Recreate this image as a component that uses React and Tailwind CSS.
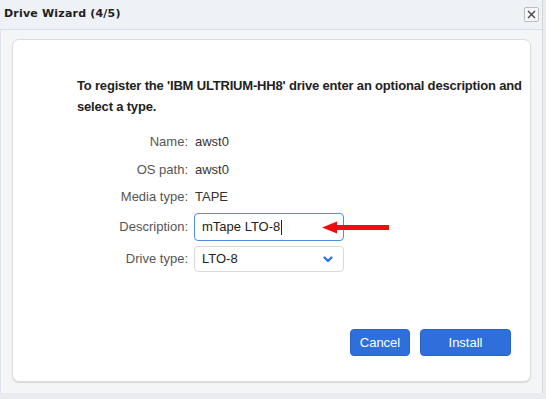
import React from "react";

const Row = ({ label, children }) => (
  <div className="flex items-center leading-[20px]">
    <div className="w-[181px] text-right pr-[6px] text-[#555]">{label}</div>
    <div className="flex-1">{children}</div>
  </div>
);

export default function App() {
  return (
    <div className="w-[546px] h-[399px] bg-[#e9ebee] relative overflow-hidden font-['Liberation_Sans',Arial,sans-serif]">
      <div className="w-[543px] h-[393px] flex flex-col bg-[#f4f5f7] border-r border-[#d3d7dd]">
        <div className="h-[30px] flex items-center justify-between pl-[4px] pr-[3px] bg-[#eef1f5] border-b border-[#d6dfec]">
          <span className="font-['DejaVu_Sans',sans-serif] font-bold text-[11px] tracking-[0.2px] text-[#222]">Drive Wizard (4/5)</span>
          <button className="w-[15px] h-[15px] flex items-center justify-center border border-[#b9bcc1] rounded-[2px] bg-[#f6f6f6]">
            <svg width="9" height="9" viewBox="0 0 9 9">
              <path d="M1 1 L8 8 M8 1 L1 8" stroke="#444" strokeWidth="1.4" />
            </svg>
          </button>
        </div>
        <div className="flex-1 pl-[11px] pr-[11px] pt-[9px] pb-[11px] border-l border-[#dde3ec]">
          <div className="h-full bg-white rounded-[7px] border border-[#dcdcdc] shadow-[0_1px_1px_rgba(0,0,0,0.12)] flex flex-col">
            <div className="pl-[64px] pr-0 pt-[35px] text-[13px] font-bold leading-[21px] tracking-[-0.18px] text-[#222]">
              To register the 'IBM ULTRIUM-HH8' drive enter an optional description and select a type.
            </div>
            <div className="mt-[15px] text-[13px] text-[#333] flex flex-col">
              <Row label="Name:">
                <span className="pl-[1px]">awst0</span>
              </Row>
              <div className="h-[8px]" />
              <Row label="OS path:">
                <span className="pl-[1px]">awst0</span>
              </Row>
              <div className="h-[7px]" />
              <Row label="Media type:">
                <span className="pl-[1px]">TAPE</span>
              </Row>
              <div className="h-[6px]" />
              <Row label="Description:">
                <div className="flex items-center">
                  <div className="w-[150px] h-[28px] border border-[#4f8de6] rounded-[4px] flex items-center pl-[7px] text-[#222]">
                    mTape LTO-8<span className="inline-block w-[1px] h-[15px] bg-[#222] ml-[1px]" />
                  </div>
                  <svg width="68" height="13" viewBox="0 0 68 13" className="ml-[-22px]">
                    <path d="M0 6.5 L15 0.5 L15 4 L67 4 L67 9 L15 9 L15 12.5 Z" fill="#f20d0d" />
                  </svg>
                </div>
              </Row>
              <div className="h-[5px]" />
              <Row label="Drive type:">
                <div className="w-[150px] h-[26px] border border-[#dadada] rounded-[4px] flex items-center justify-between pl-[7px] pr-[10px] text-[#222]">
                  <span>LTO-8</span>
                  <svg width="10" height="7" viewBox="0 0 10 7">
                    <path d="M1.5 1.5 L5 5 L8.5 1.5" stroke="#2a6fe0" strokeWidth="2.2" fill="none" strokeLinecap="round" strokeLinejoin="round" />
                  </svg>
                </div>
              </Row>
            </div>
            <div className="flex-1" />
            <div className="flex justify-end gap-[10px] pr-[19px] pb-[25px]">
              <button className="w-[60px] h-[27px] rounded-[4px] bg-[#2f6fdc] border border-[#2a64c8] text-white text-[13px]">Cancel</button>
              <button className="w-[91px] h-[27px] rounded-[4px] bg-[#2f6fdc] border border-[#2a64c8] text-white text-[13px]">Install</button>
            </div>
          </div>
        </div>
      </div>
    </div>
  );
}
